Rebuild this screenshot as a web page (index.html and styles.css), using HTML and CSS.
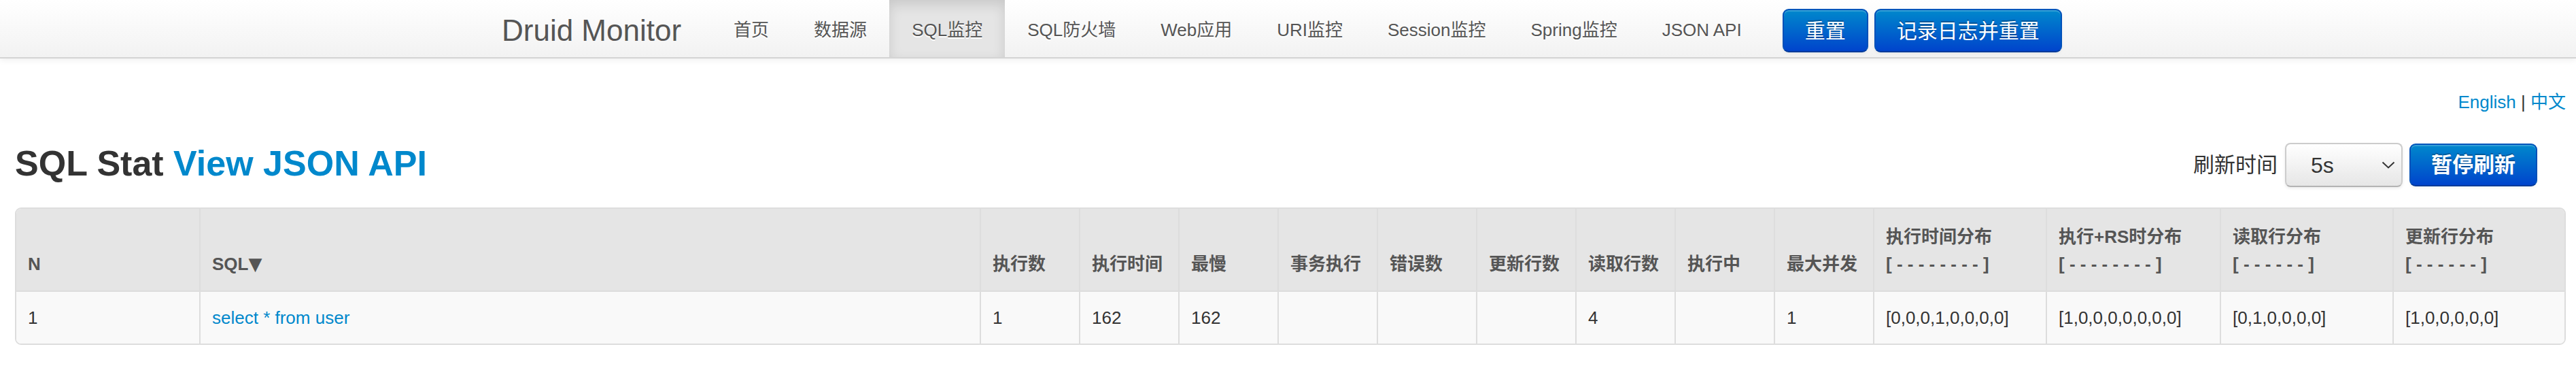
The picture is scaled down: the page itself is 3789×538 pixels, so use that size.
FILE: index.html
```html
<!DOCTYPE html>
<html lang="zh-CN">
<head>
<meta charset="utf-8">
<title>Druid Stat Index</title>
<link rel="stylesheet" href="styles.css">
</head>
<body>
<div class="navbar">
  <div class="navbar-container">
    <a class="brand" href="#">Druid Monitor</a>
    <ul class="nav">
      <li><a href="#">首页</a></li>
      <li><a href="#">数据源</a></li>
      <li class="active"><a href="#">SQL监控</a></li>
      <li><a href="#">SQL防火墙</a></li>
      <li><a href="#">Web应用</a></li>
      <li><a href="#">URI监控</a></li>
      <li><a href="#">Session监控</a></li>
      <li><a href="#">Spring监控</a></li>
      <li><a href="#">JSON API</a></li>
    </ul>
    <div class="nav-actions">
      <a class="btn btn-nav" href="#">重置</a>
      <a class="btn btn-nav" href="#">记录日志并重置</a>
    </div>
  </div>
</div>

<div class="main">
  <div class="lang-bar"><a href="#">English</a> | <a href="#">中文</a></div>

  <div class="title-row">
    <h3>SQL Stat <a href="#">View JSON API</a></h3>
    <div class="controls">
      <label class="refresh-label" for="refreshSeconds">刷新时间</label>
      <span class="select-wrap">
        <select id="refreshSeconds" class="refresh-select">
          <option selected>5s</option>
          <option>10s</option>
          <option>20s</option>
          <option>30s</option>
          <option>1min</option>
        </select>
        <svg class="chevron" width="20" height="11" viewBox="0 0 20 11"><polyline points="1.5,1.5 10,9.5 18.5,1.5" fill="none" stroke="#333" stroke-width="2"/></svg>
      </span>
      <a class="btn btn-suspend" href="#">暂停刷新</a>
    </div>
  </div>

  <div class="table-wrap">
    <table class="stat-table">
      <colgroup>
        <col class="c-n">
        <col class="c-sql">
        <col class="c-num"><col class="c-num"><col class="c-num"><col class="c-num"><col class="c-num"><col class="c-num"><col class="c-num"><col class="c-num"><col class="c-num">
        <col class="c-hist"><col class="c-hist-w"><col class="c-hist"><col class="c-hist-l">
      </colgroup>
      <thead>
        <tr>
          <th>N</th>
          <th>SQL<span class="sort">▼</span></th>
          <th>执行数</th>
          <th>执行时间</th>
          <th>最慢</th>
          <th>事务执行</th>
          <th>错误数</th>
          <th>更新行数</th>
          <th>读取行数</th>
          <th>执行中</th>
          <th>最大并发</th>
          <th>执行时间分布<br>[ - - - - - - - - ]</th>
          <th>执行+RS时分布<br>[ - - - - - - - - ]</th>
          <th>读取行分布<br>[ - - - - - - ]</th>
          <th>更新行分布<br>[ - - - - - - ]</th>
        </tr>
      </thead>
      <tbody>
        <tr>
          <td>1</td>
          <td><a href="#">select * from user</a></td>
          <td>1</td>
          <td>162</td>
          <td>162</td>
          <td></td>
          <td></td>
          <td></td>
          <td>4</td>
          <td></td>
          <td>1</td>
          <td>[0,0,0,1,0,0,0,0]</td>
          <td>[1,0,0,0,0,0,0,0]</td>
          <td>[0,1,0,0,0,0]</td>
          <td>[1,0,0,0,0,0]</td>
        </tr>
      </tbody>
    </table>
  </div>
</div>
</body>
</html>
```

FILE: styles.css
```css
html, body {
  margin: 0;
  padding: 0;
}

body {
  width: 3789px;
  overflow: hidden;
  font-family: "Liberation Sans", Arial, "Noto Sans CJK SC", sans-serif;
  font-size: 26px;
  line-height: 40px;
  color: #333;
  background: #fff;
}

a {
  color: #0088cc;
  text-decoration: none;
}

/* ---------- navbar ---------- */
.navbar {
  height: 84px;
  background: linear-gradient(to bottom, #ffffff, #f2f2f2);
  border-bottom: 2px solid #d4d4d4;
  box-shadow: 0 2px 9px rgba(0, 0, 0, 0.07);
}

.navbar-container {
  width: 2313px;
  margin: 0 auto;
  height: 84px;
  display: flex;
  align-items: flex-start;
}

.brand {
  font-size: 44px;
  line-height: 78px;
  padding: 6px 44px 0 0;
  color: #555;
}

.nav {
  display: flex;
  list-style: none;
  margin: 0;
  padding: 0;
  height: 84px;
}

.nav a {
  display: block;
  padding: 4px 33px 0;
  line-height: 80px;
  color: #555;
  text-shadow: 0 2px 0 #fff;
}

.nav .active a {
  background: #e5e5e5;
  box-shadow: inset 0 7px 18px rgba(0, 0, 0, 0.125);
}

.nav-actions {
  display: flex;
  gap: 9px;
  margin-left: 27px;
  margin-top: 13px;
}

.btn {
  display: inline-block;
  box-sizing: border-box;
  color: #fff;
  text-align: center;
  text-shadow: 0 -2px 0 rgba(0, 0, 0, 0.25);
  background: linear-gradient(to bottom, #0088cc, #0044cc);
  border: 2px solid #0044aa;
  border-color: #0055bb #0050b8 #003a99;
  border-radius: 9px;
  box-shadow: inset 0 2px 0 rgba(255, 255, 255, 0.2), 0 2px 4px rgba(0, 0, 0, 0.05);
}

.btn-nav {
  height: 64px;
  font-size: 30px;
  line-height: 58px;
  padding: 2px 31px 0;
}

/* ---------- main ---------- */
.main {
  padding: 44px 15px 0 22px;
}

.lang-bar {
  text-align: right;
  font-size: 26px;
  line-height: 40px;
}

.title-row {
  margin-top: 35px;
  height: 75px;
  display: flex;
  justify-content: space-between;
  align-items: center;
}

.title-row h3 {
  margin: 0;
  font-size: 52px;
  line-height: 70px;
  padding-bottom: 5px;
  font-weight: bold;
  color: #333;
}

.controls {
  display: flex;
  align-items: center;
  margin-right: 42px;
}

.refresh-label {
  font-size: 31px;
  line-height: 40px;
  margin-right: 11px;
  color: #333;
}

.select-wrap {
  position: relative;
  display: block;
  width: 173px;
  height: 65px;
  margin-right: 10px;
}

.refresh-select {
  appearance: none;
  -webkit-appearance: none;
  box-sizing: border-box;
  width: 100%;
  height: 100%;
  margin: 0;
  padding: 0 0 0 36px;
  font-family: "Liberation Sans", Arial, sans-serif;
  font-size: 32px;
  color: #333;
  background: linear-gradient(to bottom, #ffffff, #e6e6e6);
  border: 2px solid #cccccc;
  border-bottom-color: #b3b3b3;
  border-radius: 8px;
  box-shadow: inset 0 2px 0 rgba(255, 255, 255, 0.2), 0 2px 4px rgba(0, 0, 0, 0.08);
  outline: none;
}

.chevron {
  position: absolute;
  left: 142px;
  top: 27px;
  pointer-events: none;
}

.btn-suspend {
  height: 63px;
  font-size: 31px;
  font-weight: bold;
  line-height: 59px;
  padding: 0 30px;
}

/* ---------- table ---------- */
.table-wrap {
  margin-top: 25px;
  border: 2px solid #dddddd;
  border-radius: 9px;
  overflow: hidden;
}

.stat-table {
  width: 100%;
  table-layout: fixed;
  border-collapse: separate;
  border-spacing: 0;
}

.c-n { width: 269px; }
.c-sql { width: 1148px; }
.c-num { width: 146px; }
.c-hist { width: 254px; }
.c-hist-w { width: 256px; }
.c-hist-l { width: 253px; }

.stat-table th,
.stat-table td {
  text-align: left;
  border-left: 2px solid #dddddd;
  font-size: 26px;
  line-height: 40px;
  white-space: nowrap;
}

.stat-table th:first-child,
.stat-table td:first-child {
  border-left: 0;
}

.stat-table th {
  padding: 21px 17px 19px;
  vertical-align: bottom;
  font-weight: bold;
  color: #555;
  background: #e5e5e5;
}

.stat-table td {
  padding: 18px 17px 18px;
  vertical-align: top;
  border-top: 2px solid #dddddd;
  background: #f9f9f9;
  color: #333;
}

.sort {
  font-family: "DejaVu Sans", sans-serif;
  font-size: 26px;
  color: #555;
}
```
